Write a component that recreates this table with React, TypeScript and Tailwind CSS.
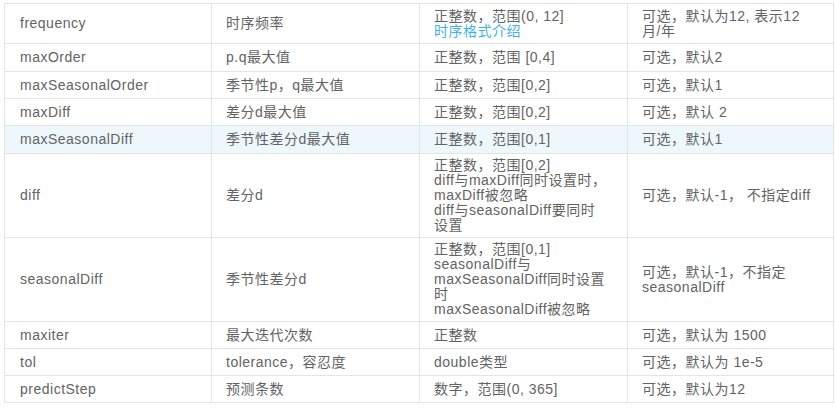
const rows: { name: string; desc: string; range: React.ReactNode; note: React.ReactNode; h: string; hover?: boolean }[] = [
	{
		name: "frequency",
		desc: "时序频率",
		h: "h-[40px]",
		range: (
			<>
				正整数，范围(0, 12]
				<br />
				<span className="text-[#45b0e6]">时序格式介绍</span>
			</>
		),
		note: (
			<>
				可选，默认为12, 表示12
				<br />
				月/年
			</>
		),
	},
	{ name: "maxOrder", desc: "p.q最大值", h: "h-[28px]", range: "正整数，范围 [0,4]", note: "可选，默认2" },
	{ name: "maxSeasonalOrder", desc: "季节性p，q最大值", h: "h-[27px]", range: "正整数，范围[0,2]", note: "可选，默认1" },
	{ name: "maxDiff", desc: "差分d最大值", h: "h-[27px]", range: "正整数，范围[0,2]", note: "可选，默认 2" },
	{ name: "maxSeasonalDiff", desc: "季节性差分d最大值", h: "h-[28px]", range: "正整数，范围[0,1]", note: "可选，默认1", hover: true },
	{
		name: "diff",
		desc: "差分d",
		h: "h-[84px]",
		range: (
			<>
				正整数，范围[0,2]
				<br />
				diff与maxDiff同时设置时，
				<br />
				maxDiff被忽略
				<br />
				diff与seasonalDiff要同时
				<br />
				设置
			</>
		),
		note: "可选，默认-1， 不指定diff",
	},
	{
		name: "seasonalDiff",
		desc: "季节性差分d",
		h: "h-[84px]",
		range: (
			<>
				正整数，范围[0,1]
				<br />
				seasonalDiff与
				<br />
				maxSeasonalDiff同时设置
				<br />
				时
				<br />
				maxSeasonalDiff被忽略
			</>
		),
		note: (
			<>
				可选，默认-1，不指定
				<br />
				seasonalDiff
			</>
		),
	},
	{ name: "maxiter", desc: "最大迭代次数", h: "h-[27px]", range: "正整数", note: "可选，默认为 1500" },
	{ name: "tol", desc: "tolerance，容忍度", h: "h-[27px]", range: "double类型", note: "可选，默认为 1e-5" },
	{ name: "predictStep", desc: "预测条数", h: "h-[27px]", range: "数字，范围(0, 365]", note: "可选，默认为12" },
];

export default function App() {
	return (
		<div className="w-[836px] h-[409px] bg-white pl-[4px] pt-[3px] font-['Liberation_Sans','Noto_Sans_CJK_SC',sans-serif]">
			<table className="table-fixed border-collapse w-[829px] text-[14px] leading-[15px] tracking-[0.5px] text-[#636363]">
				<colgroup>
					<col className="w-[207px]" />
					<col className="w-[208px]" />
					<col className="w-[208px]" />
					<col className="w-[206px]" />
				</colgroup>
				<tbody>
					{rows.map((r) => (
						<tr key={r.name} className={`${r.h} ${r.hover ? "bg-[#eef8fc]" : ""}`}>
							<td className="border border-[#e4e4e4] px-[15px] py-0 align-middle whitespace-nowrap">{r.name}</td>
							<td className="border border-[#e4e4e4] px-[14px] py-0 align-middle whitespace-nowrap">{r.desc}</td>
							<td className="border border-[#e4e4e4] px-[14px] py-0 align-middle whitespace-nowrap">{r.range}</td>
							<td className="border border-[#e4e4e4] px-[14px] py-0 align-middle whitespace-nowrap">{r.note}</td>
						</tr>
					))}
				</tbody>
			</table>
		</div>
	);
}
